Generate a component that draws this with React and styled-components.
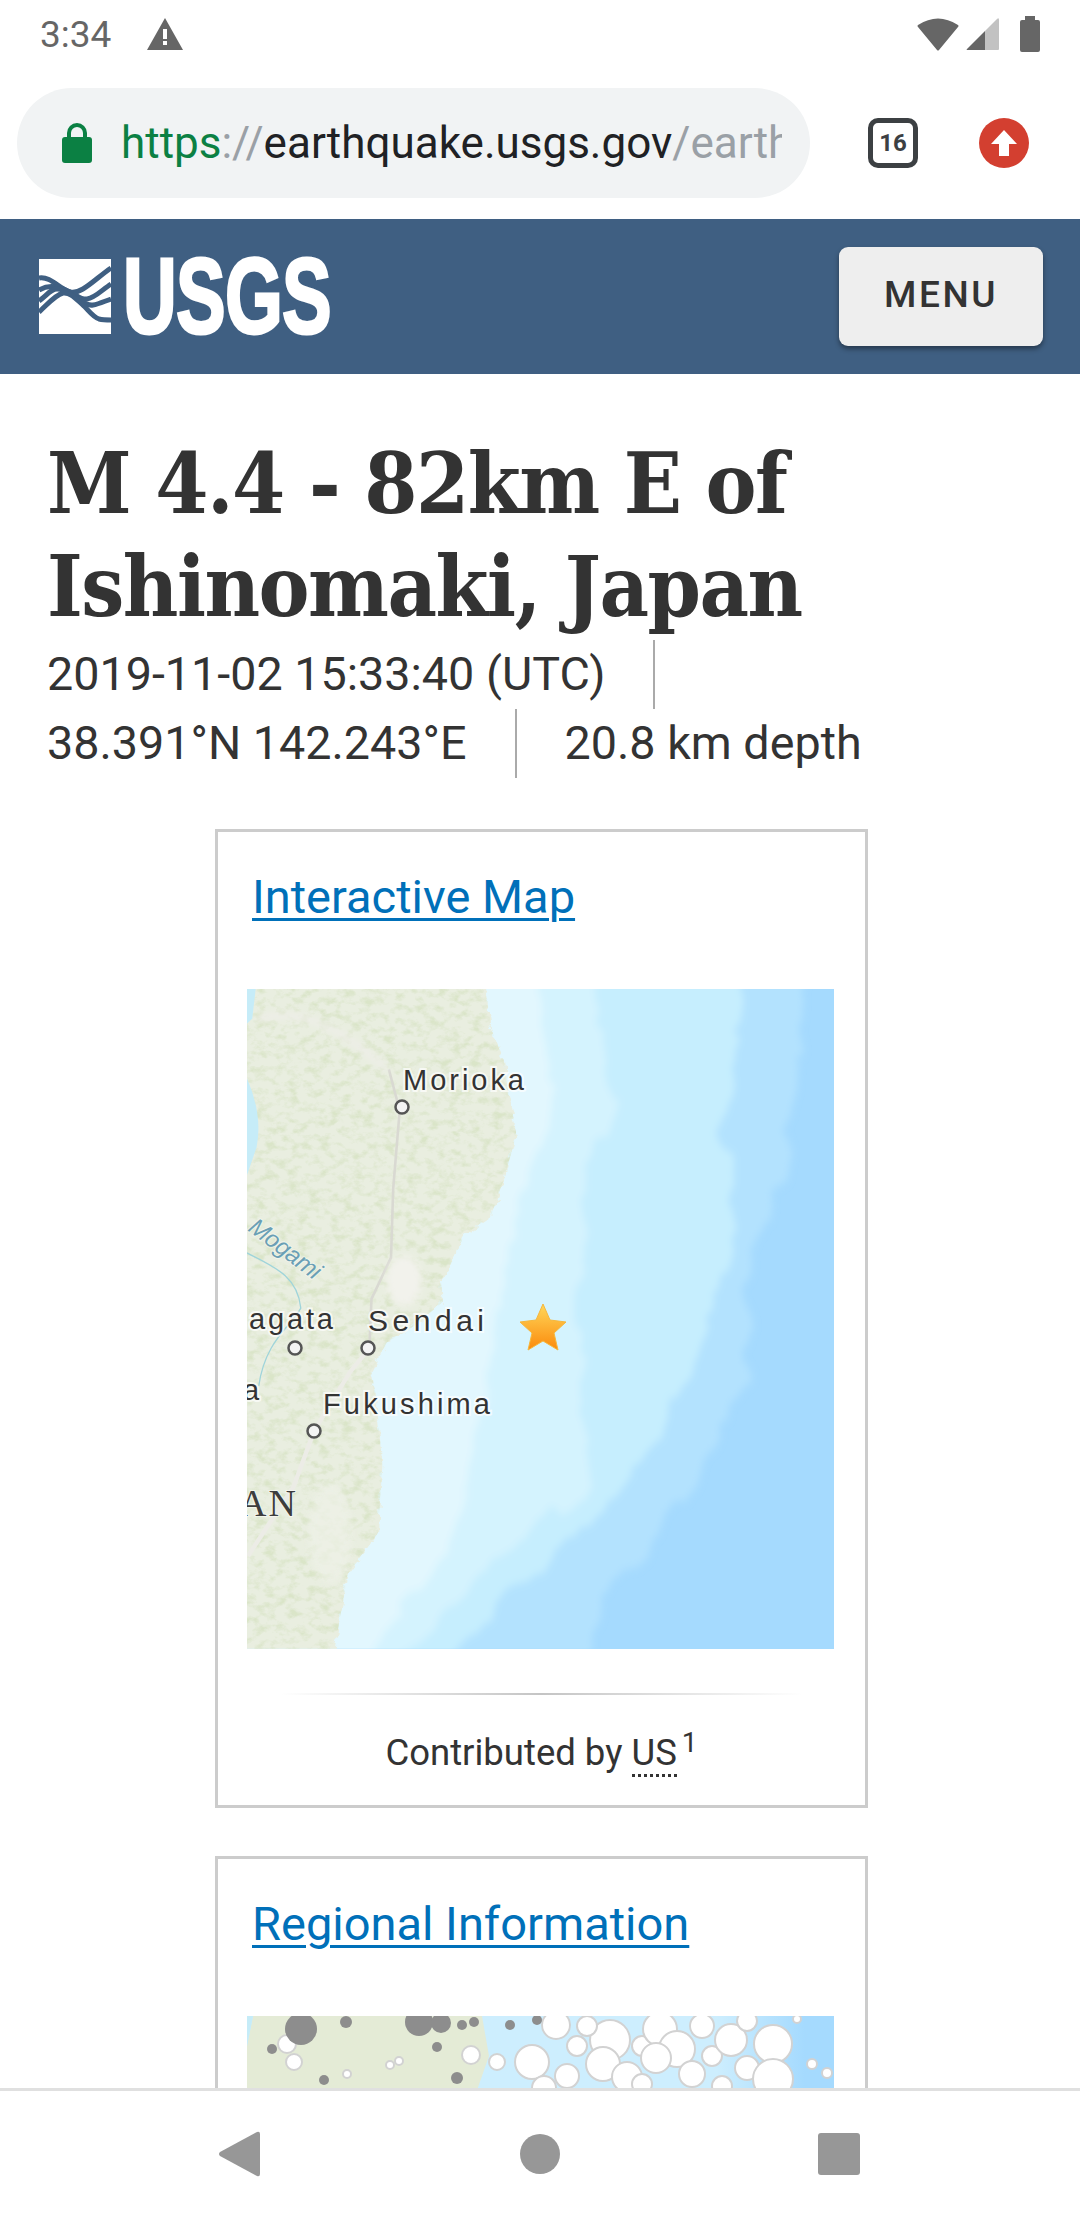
import React from 'react';
import styled, { createGlobalStyle } from 'styled-components';

const Global = createGlobalStyle`
  html, body { margin: 0; padding: 0; background: #fff; }
  body { font-family: Roboto, "Liberation Sans", sans-serif; }
`;

const Screen = styled.div`
  width: 1080px;
  height: 2220px;
  display: flex;
  flex-direction: column;
  overflow: hidden;
  background: #fff;
  color: #333;
`;

const StatusBar = styled.div`
  height: 68px;
  flex: none;
  display: flex;
  align-items: center;
  padding: 0 40px;
  color: #666;
  font-size: 37px;
`;
const StatusTime = styled.span`
  width: 107px;
`;
const StatusRight = styled.div`
  margin-left: auto;
  display: flex;
  align-items: center;
  gap: 7px;
`;

const Toolbar = styled.div`
  height: 151px;
  flex: none;
  display: flex;
  align-items: flex-start;
  padding: 20px 17px 0;
  box-sizing: border-box;
`;
const UrlPill = styled.div`
  width: 793px;
  height: 110px;
  border-radius: 55px;
  background: #f1f3f4;
  display: flex;
  align-items: center;
  padding: 0 28px 0 45px;
  box-sizing: border-box;
  flex: none;
`;
const UrlText = styled.div`
  margin-left: 29px;
  font-size: 44px;
  white-space: nowrap;
  overflow: hidden;
  flex: 1;
  color: #202124;
`;
const UrlPart = styled.span`
  color: ${p => p.$color};
`;
const TabCount = styled.div`
  width: 50px;
  height: 50px;
  margin-left: 58px;
  margin-top: 30px;
  border: 5px solid #3c4043;
  border-radius: 10px;
  box-sizing: border-box;
  display: flex;
  align-items: center;
  justify-content: center;
  font-size: 24px;
  font-weight: 700;
  color: #3c4043;
  flex: none;
`;
const UpdateBadge = styled.div`
  width: 50px;
  height: 50px;
  margin-left: 61px;
  margin-top: 30px;
  border-radius: 50%;
  background: #d33f30;
  display: flex;
  align-items: center;
  justify-content: center;
  flex: none;
`;

const Header = styled.header`
  height: 155px;
  flex: none;
  background: #3f5f82;
  display: flex;
  align-items: center;
  padding: 0 37px 0 39px;
  box-sizing: border-box;
`;
const LogoMark = styled.svg`
  width: 72px;
  height: 75px;
  flex: none;
`;
const LogoWord = styled.span`
  display: block;
  width: 207px;
  margin-left: 12px;
  font-family: "Liberation Sans", Arial, sans-serif;
  font-weight: 700;
  font-size: 107px;
  line-height: 75px;
  color: #fff;
  -webkit-text-stroke: 3px #fff;
  transform: scaleX(0.695);
  transform-origin: left center;
  letter-spacing: -1px;
`;
const MenuButton = styled.button`
  margin-left: auto;
  width: 204px;
  height: 99px;
  border: 0;
  border-radius: 9px;
  background: #eee;
  box-shadow: 0 3px 5px rgba(0, 0, 0, 0.4);
  font-family: Roboto, sans-serif;
  font-weight: 500;
  font-size: 37px;
  letter-spacing: 2.6px;
  color: #333;
  padding: 0 0 4px;
`;

const Main = styled.main`
  flex: 1;
  min-height: 0;
  overflow: hidden;
  padding: 0 47px;
`;
const Title = styled.h1`
  margin: 58px 0 0;
  font-family: "DejaVu Serif", "Liberation Serif", serif;
  font-stretch: condensed;
  font-weight: 700;
  font-size: 85px;
  line-height: 103px;
  letter-spacing: -1.5px;
  color: #333;
`;
const Meta = styled.ul`
  list-style: none;
  margin: 2px 0 0;
  padding: 0;
  display: flex;
  flex-wrap: wrap;
`;
const MetaItem = styled.li`
  font-size: 46.7px;
  line-height: 69px;
  padding-right: 48px;
  margin-right: 48px;
  border-right: 2px solid #aaa;
  &:last-child {
    border-right: 0;
    margin-right: 0;
    padding-right: 0;
  }
`;
const Card = styled.section`
  width: 653px;
  margin: ${p => p.$top}px 0 0 168px;
  border: 3px solid #ccc;
  box-sizing: border-box;
  padding: 0 29px;
  height: ${p => p.$height}px;
`;
const CardLink = styled.a`
  display: block;
  margin: 0 0 0 5px;
  padding-top: 38px;
  height: 157px;
  box-sizing: border-box;
  font-size: 47px;
  line-height: 53px;
  color: #0070b9;
  text-decoration: underline;
  text-decoration-thickness: 3px;
  text-underline-offset: 5px;
`;
const MapFrame = styled.svg`
  display: block;
  width: 587px;
  height: 660px;
`;
const Rule = styled.div`
  height: 2px;
  margin: 44px 34px 0;
  background: linear-gradient(to right, rgba(0,0,0,0), #c4c4c4 50%, rgba(0,0,0,0));
`;
const Credit = styled.p`
  margin: 36px 0 0;
  text-align: center;
  font-size: 36.5px;
  line-height: 44px;
  color: #333;
`;
const Abbr = styled.span`
  border-bottom: 3px dotted #333;
`;
const Sup = styled.sup`
  font-size: 28px;
  line-height: 0;
  margin-left: 5px;
`;

const BottomNav = styled.nav`
  height: 132px;
  flex: none;
  background: #fff;
  border-top: 3px solid #e0e0e0;
  box-sizing: border-box;
  display: flex;
  align-items: center;
  padding: 0 220px 4px 219px;
  justify-content: space-between;
`;

const Warning = () => (
  <svg width="36" height="32" viewBox="0 0 36 32">
    <path d="M18 0 L36 32 H0 Z" fill="#666" />
    <rect x="16" y="11" width="4" height="10" fill="#fff" />
    <rect x="16" y="23" width="4" height="4" fill="#fff" />
  </svg>
);
const StatusIcons = () => (
  <>
    <svg width="42" height="34" viewBox="0 0 42 34">
      <path d="M1 8 Q21 -5 41 8 Q42 9 41 10 L22 33 Q21 34 20 33 L1 10 Q0 9 1 8 Z" fill="#666" />
    </svg>
    <svg width="33" height="34" viewBox="0 0 33 34">
      <path d="M19 14 L31 2 Q33 0 33 3 V32 Q33 33 32 33 H19 Z" fill="#c2c2c2" />
      <path d="M19 14 V33 H1 Q0 33 1 32 Z" fill="#666" />
    </svg>
    <svg width="20" height="36" viewBox="0 0 20 36" style={{ marginLeft: 14 }}>
      <path d="M5 0 H15 V4 H18 Q20 4 20 6 V34 Q20 36 18 36 H2 Q0 36 0 34 V6 Q0 4 2 4 H5 Z" fill="#666" />
    </svg>
  </>
);
const Lock = () => (
  <svg width="30" height="40" viewBox="0 0 30 40">
    <path d="M7 15 V10 a8 8 0 0 1 16 0 V15" fill="none" stroke="#0b8043" strokeWidth="4" />
    <rect y="14" width="30" height="26" rx="3" fill="#0b8043" />
  </svg>
);
const UpArrow = () => (
  <svg width="28" height="30" viewBox="0 0 28 30"><path d="M14 2 L27 16 H19 V28 H9 V16 H1 Z" fill="#fff" /></svg>
);
const UsgsMark = () => (
  <LogoMark viewBox="0 0 72 75">
    <rect width="72" height="75" fill="#fff" />
    <g fill="none" stroke="#3f5f82" strokeWidth="5">
      <path d="M0 19 C12 17 20 30 31 33 C42 36 56 20 72 9" />
      <path d="M0 31 C12 24 22 29 31 33 C38 36 42 41 48 40 C56 39 64 30 72 25" />
      <path d="M0 42 C8 36 12 30 18 30 C26 30 32 36 38 39 C44 43 48 47 54 46 C60 45 66 42 72 40" />
      <path d="M0 53 C8 46 16 36 24 34 C32 33 38 41 45 47 C50 52 54 58 60 60 C64 61 68 61 72 61" />
    </g>
  </LogoMark>
);

const MAP_SCALE = 'scale(0.4338 0.4591) translate(-108 -65)';
const LAND = 'M60 30 H650 L665 110 L670 150 L700 220 L712 300 L730 380 L715 430 L700 480 L670 560 L610 600 L580 660 L555 700 L560 745 L500 795 L430 835 L395 900 L405 950 L410 1000 L420 1100 L410 1250 L340 1340 L305 1530 H60 Z';

const CityLabel = ({ x, y, width, size = 29, children }) => (
  <text x={x} y={y} textLength={width} fontFamily="Liberation Sans, sans-serif" fontSize={size} fill="#333"
    stroke="#fff" strokeWidth="4" strokeOpacity="0.7" paintOrder="stroke">{children}</text>
);
const City = ({ x, y }) => <circle cx={x} cy={y} r="6.5" fill="#f4f4f4" stroke="#555" strokeWidth="2.5" />;

const QuakeMap = () => (
  <MapFrame viewBox="0 0 587 660">
    <defs>
      <filter id="wavy" x="-10%" y="-10%" width="120%" height="120%">
        <feTurbulence type="fractalNoise" baseFrequency="0.012" numOctaves="3" seed="4" result="n" />
        <feDisplacementMap in="SourceGraphic" in2="n" scale="70" xChannelSelector="R" yChannelSelector="G" />
        <feGaussianBlur stdDeviation="9" />
      </filter>
      <filter id="coast" x="-5%" y="-5%" width="110%" height="110%">
        <feTurbulence type="fractalNoise" baseFrequency="0.05" numOctaves="3" seed="9" result="n" />
        <feDisplacementMap in="SourceGraphic" in2="n" scale="22" xChannelSelector="R" yChannelSelector="G" />
        <feGaussianBlur stdDeviation="1.2" />
      </filter>
      <filter id="soft" x="-20%" y="-20%" width="140%" height="140%"><feGaussianBlur stdDeviation="7" /></filter>
      <filter id="mottle" x="0" y="0" width="100%" height="100%">
        <feTurbulence type="fractalNoise" baseFrequency="0.04 0.06" numOctaves="4" seed="7" />
        <feColorMatrix values="0 0 0 0 0.7  0 0 0 0 0.78  0 0 0 0 0.58  3 0 0 0 -1.35" />
      </filter>
      <clipPath id="mapEdge"><rect x="108" y="65" width="1354" height="1437" /></clipPath>
      <clipPath id="landShape"><path d={LAND} /></clipPath>
      <linearGradient id="starFill" x1="0" y1="0" x2="0" y2="1">
        <stop offset="0" stopColor="#ffd75a" />
        <stop offset="1" stopColor="#fb8a0c" />
      </linearGradient>
    </defs>
    <rect width="587" height="660" fill="#a5dafe" />
    <g transform={MAP_SCALE} clipPath="url(#mapEdge)">
      <g filter="url(#wavy)">
        <path d="M0 0 H1395 L1365 400 L1260 700 L1270 900 L1130 1150 L930 1400 L880 1560 H0 Z" fill="#b3e2fe" />
        <path d="M0 0 H1270 L1210 300 L1230 600 L1130 900 L980 1150 L650 1450 L530 1560 H0 Z" fill="#c6eefe" />
        <path d="M0 0 H890 L960 300 L880 450 L870 800 L890 1150 L630 1350 L430 1560 H0 Z" fill="#d4f3fe" />
        <path d="M0 0 H790 L810 300 L750 500 L690 800 L620 1100 L570 1300 L430 1450 L360 1560 H0 Z" fill="#e2f7fe" />
      </g>
      <g filter="url(#coast)">
        <path d={LAND} fill="#e9eee0" />
      </g>
      <g clipPath="url(#landShape)">
        <rect x="108" y="65" width="620" height="1437" filter="url(#mottle)" />
        <path d="M435 240 L460 330 L445 500 L440 650 L395 740 L390 848" fill="none" stroke="#d9d9d2" strokeWidth="6" />
        <path d="M390 848 L345 900 L263 1027 L215 1150 L110 1300" fill="none" stroke="#ecece6" strokeWidth="10" />
        <ellipse cx="470" cy="700" rx="40" ry="55" fill="#f2f2ec" filter="url(#soft)" />
        <ellipse cx="300" cy="1250" rx="50" ry="110" fill="#eef1e7" filter="url(#soft)" opacity="0.7" />
        <path d="M130 130 C220 110 300 130 430 240" fill="none" stroke="#eeeee8" strokeWidth="14" filter="url(#soft)" />
      </g>
      <path d="M108 260 Q145 340 130 410 L108 470 Z" fill="#c6ecf8" />
      <path d="M108 65 H128 L120 130 L108 140 Z" fill="#c6ecf8" />
      <path d="M108 640 C170 670 225 690 232 760 C210 800 150 830 135 930" fill="none" stroke="#9fd4da" strokeWidth="3" />
    </g>
    <text transform="translate(0 241) rotate(37)" fontFamily="Liberation Sans, sans-serif" fontStyle="italic" fontSize="24" fill="#6a9fb5" stroke="#fff" strokeWidth="2" strokeOpacity="0.4" paintOrder="stroke" textLength="84">Mogami</text>
    <CityLabel x="156" y="101" width="121">Morioka</CityLabel>
    <CityLabel x="2" y="340" width="84">agata</CityLabel>
    <CityLabel x="121" y="342" width="116" size="30">Sendai</CityLabel>
    <CityLabel x="76" y="425" width="167">Fukushima</CityLabel>
    <CityLabel x="-4" y="411" width="16">a</CityLabel>
    <text x="-8" y="527" fontFamily="Liberation Serif, serif" fontSize="38" fill="#3d3d3d" stroke="#fff" strokeWidth="2" strokeOpacity="0.5" paintOrder="stroke" letterSpacing="2">AN</text>
    <City x={155} y={118} />
    <City x={48} y={359} />
    <City x={121} y={359} />
    <City x={67} y={442} />
    <path d="M296 315 L303 331 L319 333 L307 344 L311 361 L296 352 L281 361 L285 344 L273 333 L289 331 Z" fill="url(#starFill)" stroke="#f6b73c" strokeWidth="1" />
  </MapFrame>
);

const GREY_DOTS = [[54, 13, 16], [99, 6, 6], [172, 6, 14], [194, 7, 10], [215, 9, 5], [227, 6, 5], [263, 9, 5], [290, 4, 5], [25, 33, 5], [190, 31, 5], [210, 62, 6], [77, 64, 5]];
const WHITE_DOTS = [[40, 28, 9], [47, 46, 8], [100, 58, 4], [143, 49, 4], [152, 45, 4], [224, 39, 9], [250, 46, 8],
  [309, 9, 14], [285, 46, 17], [330, 30, 10], [320, 60, 12], [363, 24, 20], [356, 48, 17], [380, 61, 15], [340, 10, 10],
  [395, 30, 10], [413, 13, 17], [430, 33, 18], [409, 42, 15], [445, 58, 13], [455, 10, 12], [465, 40, 10], [484, 24, 16],
  [500, 52, 12], [526, 28, 19], [526, 63, 20], [500, 5, 10], [395, 68, 10], [475, 70, 10], [297, 72, 12], [565, 48, 5], [580, 57, 5], [550, 3, 4]];

const RegionMap = () => (
  <MapFrame viewBox="0 0 587 660">
    <defs>
      <linearGradient id="regionSea" x1="0" y1="0" x2="1" y2="0">
        <stop offset="0.8" stopColor="#cdeefe" />
        <stop offset="0.95" stopColor="#a5dafe" />
      </linearGradient>
    </defs>
    <rect width="587" height="660" fill="url(#regionSea)" />
    <path d="M6 0 H235 L242 40 L228 80 V660 H0 V30 Z" fill="#e4ebd6" />
    <path d="M0 0 H6 L0 30 Z" fill="#c6ecf8" />
    <g fill="#fff" stroke="#d2d2d2" strokeWidth="2">
      {WHITE_DOTS.map(([x, y, r]) => <circle key={`${x}-${y}`} cx={x} cy={y} r={r} />)}
    </g>
    <g fill="#8d8d8d">
      {GREY_DOTS.map(([x, y, r]) => <circle key={`${x}-${y}`} cx={x} cy={y} r={r} />)}
    </g>
  </MapFrame>
);

export default function App() {
  return (
    <Screen>
      <Global />
      <StatusBar>
        <StatusTime>3:34</StatusTime>
        <Warning />
        <StatusRight><StatusIcons /></StatusRight>
      </StatusBar>
      <Toolbar>
        <UrlPill>
          <Lock />
          <UrlText>
            <UrlPart $color="#0b8043">https</UrlPart>
            <UrlPart $color="#9aa0a6">://</UrlPart>
            earthquake.usgs.gov
            <UrlPart $color="#9aa0a6">/earthquakes/eventpage</UrlPart>
          </UrlText>
        </UrlPill>
        <TabCount>16</TabCount>
        <UpdateBadge><UpArrow /></UpdateBadge>
      </Toolbar>
      <Header>
        <UsgsMark />
        <LogoWord>USGS</LogoWord>
        <MenuButton>MENU</MenuButton>
      </Header>
      <Main>
        <Title>M 4.4 - 82km E of Ishinomaki, Japan</Title>
        <Meta>
          <MetaItem>2019-11-02 15:33:40 (UTC)</MetaItem>
          <MetaItem>38.391°N 142.243°E</MetaItem>
          <MetaItem>20.8 km depth</MetaItem>
        </Meta>
        <Card $top={51} $height={979}>
          <CardLink>Interactive Map</CardLink>
          <QuakeMap />
          <Rule />
          <Credit>Contributed by <Abbr>US</Abbr><Sup>1</Sup></Credit>
        </Card>
        <Card $top={48} $height={400}>
          <CardLink>Regional Information</CardLink>
          <RegionMap />
        </Card>
      </Main>
      <BottomNav>
        <svg width="42" height="46" viewBox="0 0 42 46"><path d="M41 3 V43 Q41 46 38 45 L1 25 Q-1 23 1 21 L38 1 Q41 0 41 3 Z" fill="#979797" /></svg>
        <svg width="40" height="40" viewBox="0 0 40 40"><circle cx="20" cy="20" r="20" fill="#979797" /></svg>
        <svg width="42" height="42" viewBox="0 0 42 42"><rect width="42" height="42" rx="3" fill="#979797" /></svg>
      </BottomNav>
    </Screen>
  );
}
